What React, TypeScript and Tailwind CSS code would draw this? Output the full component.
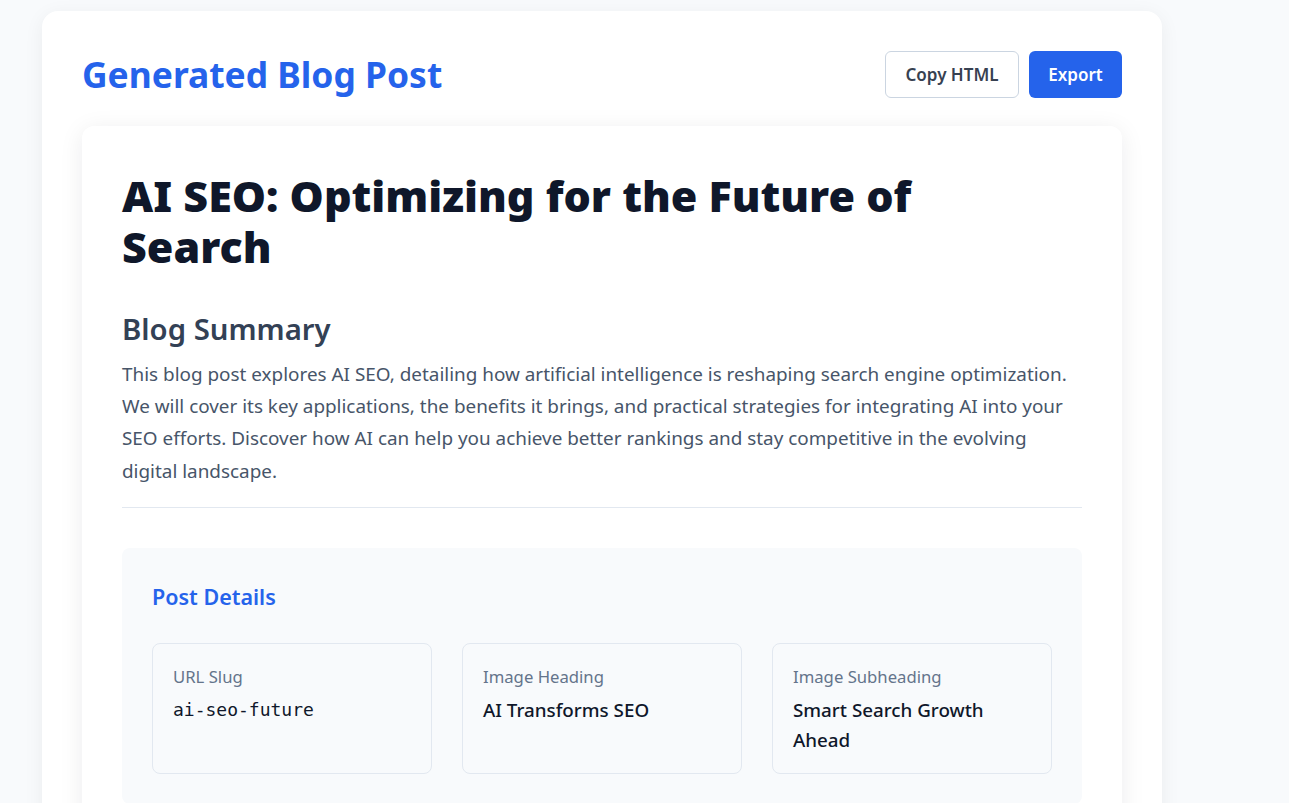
import React from "react";

const details = [
  { label: "URL Slug", value: "ai-seo-future", mono: true },
  { label: "Image Heading", value: "AI Transforms SEO" },
  { label: "Image Subheading", value: "Smart Search Growth Ahead" },
];

export default function App() {
  return (
    <div
      className="min-h-screen bg-[#f8fafc] pl-[42px] pt-[11px] overflow-hidden"
      style={{ fontFamily: '"Segoe UI", "Noto Sans", "Open Sans", sans-serif' }}
    >
      <div className="w-[1120px] bg-white rounded-2xl shadow-[0_4px_20px_rgba(15,23,42,0.06)] px-10 pt-10 pb-10">
        {/* Header */}
        <div className="flex items-center justify-between">
          <h1 className="text-[35.4px] font-bold text-[#2563eb] leading-tight">Generated Blog Post</h1>
          <div className="flex gap-[10px]">
            <button className="h-[47px] w-[134px] rounded-md border border-[#cbd5e1] bg-white text-[17px] font-semibold text-[#374151]">
              Copy HTML
            </button>
            <button className="h-[47px] w-[93px] rounded-md bg-[#2563eb] text-[17px] font-semibold text-white">
              Export
            </button>
          </div>
        </div>

        {/* Article */}
        <div className="mt-7 bg-white rounded-xl shadow-[0_4px_24px_rgba(15,23,42,0.08)] px-10 pt-[44px] pb-10">
          <h2 className="text-[43px] font-black leading-[51px] text-[#0f172a] max-w-[840px]">
            AI SEO: Optimizing for the Future of Search
          </h2>

          <h3 className="mt-[39px] text-[29.3px] font-semibold text-[#334155] leading-tight">Blog Summary</h3>
          <p className="mt-[10px] text-[18.9px] leading-[32.3px] text-[#475569]">
            This blog post explores AI SEO, detailing how artificial intelligence is reshaping search engine optimization.
            We will cover its key applications, the benefits it brings, and practical strategies for integrating AI into your
            SEO efforts. Discover how AI can help you achieve better rankings and stay competitive in the evolving
            digital landscape.
          </p>
          <div className="mt-5 border-t border-[#e2e8f0]" />

          {/* Post details */}
          <div className="mt-10 rounded-lg bg-[#f8fafc] p-[30px]">
            <h4 className="text-[21.5px] font-semibold text-[#2563eb] leading-[38px]">Post Details</h4>
            <div className="mt-[27px] grid grid-cols-3 gap-[30px]">
              {details.map((d) => (
                <div key={d.label} className="h-[131px] rounded-lg border border-[#e2e8f0] px-5 pt-[21px]">
                  <div className="text-[16.7px] text-[#64748b] leading-6">{d.label}</div>
                  <div
                    className="mt-[6px] text-[18.8px] font-medium leading-[30px] text-[#0f172a]"
                    style={d.mono ? { fontFamily: '"DejaVu Sans Mono", "Liberation Mono", monospace', fontSize: 18, fontWeight: 400 } : undefined}
                  >
                    {d.value}
                  </div>
                </div>
              ))}
            </div>
          </div>
        </div>
      </div>
    </div>
  );
}
